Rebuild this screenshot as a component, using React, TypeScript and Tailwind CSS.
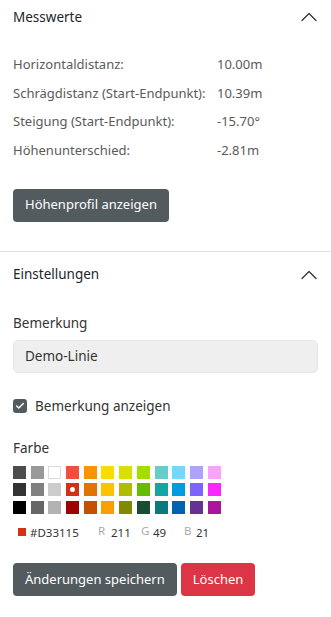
import { ChevronUp, Check } from "lucide-react";

const COLORS = [
  "#4D4D4D", "#999999", "#FFFFFF", "#F44E3B", "#FE9200", "#FCDC00", "#DBDF00", "#A4DD00", "#68CCCA", "#73D8FF", "#AEA1FF", "#FDA1FF",
  "#333333", "#808080", "#CCCCCC", "#D33115", "#E27300", "#FCC400", "#B0BC00", "#68BC00", "#16A5A5", "#009CE0", "#7B64FF", "#FA28FF",
  "#000000", "#666666", "#B3B3B3", "#9F0500", "#C45100", "#FB9E00", "#808900", "#194D33", "#0C797D", "#0062B1", "#653294", "#AB149E",
];

const SELECTED = "#D33115";

const rows = [
  ["Horizontaldistanz:", "10.00m"],
  ["Schrägdistanz (Start-Endpunkt):", "10.39m"],
  ["Steigung (Start-Endpunkt):", "-15.70°"],
  ["Höhenunterschied:", "-2.81m"],
];

function SectionHeader({ title, className }: { title: string; className: string }) {
  return (
    <div className={`flex items-center justify-between pl-[13px] pr-[8px] ${className}`}>
      <span className="text-[13.5px] text-[#212529]">{title}</span>
      <ChevronUp className="h-[28px] w-[28px] text-[#333]" strokeWidth={1.1} />
    </div>
  );
}

export default function App() {
  return (
    <div className="min-h-[617px] w-[331px] bg-white font-['Noto_Sans','Open_Sans',sans-serif] text-[13px]">
      <SectionHeader title="Messwerte" className="h-[34px]" />

      <div className="mt-[17px] px-[13px] text-[#5a5a5a]">
        {rows.map(([label, value]) => (
          <div key={label} className="flex h-[28.4px] items-center">
            <span className="w-[204px]">{label}</span>
            <span>{value}</span>
          </div>
        ))}
        <button
          type="button"
          className="mt-[24px] h-[33px] rounded-[4px] bg-[#535b5f] px-[12px] text-[13px] text-white"
        >
          Höhenprofil anzeigen
        </button>
      </div>

      <div className="mt-[29px] h-px bg-[#e2e2e2]" />

      <SectionHeader title="Einstellungen" className="h-[46px]" />

      <div className="px-[13px] text-[13.5px]">
        <div className="mt-[15px] leading-[20px] text-[#333]">Bemerkung</div>
        <div className="mt-[7px] flex h-[33px] items-center rounded-[5px] border border-[#e6e6e6] bg-[#efefef] px-[11px] text-[#333]">
          Demo-Linie
        </div>

        <label className="mt-[26px] flex items-center gap-[8px] text-[#333]">
          <span className="grid h-[14px] w-[14px] place-items-center rounded-[3px] bg-[#535b5f]">
            <Check className="h-[10px] w-[10px] text-white" strokeWidth={3.5} />
          </span>
          <span className="leading-[14px]">Bemerkung anzeigen</span>
        </label>

        <div className="mt-[25px] leading-[20px] text-[#333]">Farbe</div>
        <div className="mt-[8px] grid grid-cols-[repeat(12,13px)] gap-x-[4.7px] gap-y-[4.5px]">
          {COLORS.map((c) => (
            <div
              key={c}
              className={`grid h-[13px] w-[13px] place-items-center ${c === "#FFFFFF" ? "border border-[#dcdcdc]" : ""}`}
              style={{ background: c }}
            >
              {c === SELECTED ? <span className="h-[5px] w-[5px] rounded-full bg-white" /> : null}
            </div>
          ))}
        </div>

        <div className="mt-[10px] flex items-center text-[11.5px] text-[#333]">
          <span className="ml-[5px] h-[8px] w-[8px]" style={{ background: SELECTED }} />
          <span className="ml-[4px] w-[68px]">#D33115</span>
          <span className="relative -top-[2px] w-[13px] text-[11.5px] text-[#aaa]">R</span>
          <span className="w-[30px]">211</span>
          <span className="relative -top-[2px] w-[12px] text-[11.5px] text-[#aaa]">G</span>
          <span className="w-[31px]">49</span>
          <span className="relative -top-[2px] w-[12px] text-[11.5px] text-[#aaa]">B</span>
          <span>21</span>
        </div>

        <div className="mt-[22px] flex gap-[4px] text-[13px]">
          <button type="button" className="h-[33px] rounded-[4px] bg-[#535b5f] px-[12px] text-white">
            Änderungen speichern
          </button>
          <button type="button" className="h-[33px] rounded-[4px] bg-[#dc3545] px-[12px] text-white">
            Löschen
          </button>
        </div>
      </div>
    </div>
  );
}
